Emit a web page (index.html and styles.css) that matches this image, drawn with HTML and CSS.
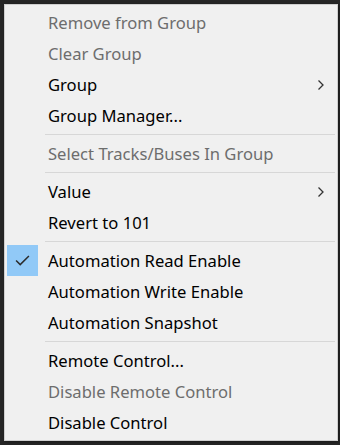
FILE: index.html
```html
<!DOCTYPE html>
<html lang="en">
<head>
    <meta charset="UTF-8">
    <title>Context Menu</title>
    <link rel="stylesheet" href="styles.css">
</head>
<body>
    <div class="menu">
        <div class="item disabled"><span class="check"></span><span class="label">Remove from Group</span></div>
        <div class="item disabled"><span class="check"></span><span class="label">Clear Group</span></div>
        <div class="item"><span class="check"></span><span class="label">Group</span>
            <svg class="arrow" viewBox="0 0 8 12"><path d="M1.5 1.5 L6 6 L1.5 10.5" /></svg>
        </div>
        <div class="item"><span class="check"></span><span class="label">Group Manager...</span></div>

        <div class="separator"></div>

        <div class="item disabled"><span class="check"></span><span class="label">Select Tracks/Buses In Group</span></div>

        <div class="separator"></div>

        <div class="item"><span class="check"></span><span class="label">Value</span>
            <svg class="arrow" viewBox="0 0 8 12"><path d="M1.5 1.5 L6 6 L1.5 10.5" /></svg>
        </div>
        <div class="item"><span class="check"></span><span class="label">Revert to 101</span></div>

        <div class="separator"></div>

        <div class="item"><span class="check checked">
            <svg viewBox="0 0 16 12"><path d="M1 6 L5.5 10.5 L15 1" /></svg>
        </span><span class="label">Automation Read Enable</span></div>
        <div class="item"><span class="check"></span><span class="label">Automation Write Enable</span></div>
        <div class="item"><span class="check"></span><span class="label">Automation Snapshot</span></div>

        <div class="separator"></div>

        <div class="item"><span class="check"></span><span class="label">Remote Control...</span></div>
        <div class="item disabled"><span class="check"></span><span class="label">Disable Remote Control</span></div>
        <div class="item"><span class="check"></span><span class="label">Disable Control</span></div>
    </div>
</body>
</html>
```

FILE: styles.css
```css
* {
    margin: 0;
    padding: 0;
    box-sizing: border-box;
}

body {
    font-family: 'Noto Sans', 'Open Sans', sans-serif;
    width: 340px;
    height: 445px;
    background: #262626;
    padding: 4px 2px 0 4px;
    overflow: hidden;
}

/* Menu box */
.menu {
    width: 334px;
    background: #f0f0f0;
    border: 1px solid #cfcfcf;
    padding: 2px 1px 2px 1px;
    display: flex;
    flex-direction: column;
    box-shadow: 1px 1px 3px rgba(0, 0, 0, 0.35);
}

.item {
    height: 31px;
    display: flex;
    align-items: center;
    font-size: 16.6px;
    color: #000;
    position: relative;
}

.item.disabled {
    color: #6d6d6d;
}

.check {
    width: 31px;
    height: 31px;
    margin-left: 1px;
    margin-right: 10px;
    display: flex;
    align-items: center;
    justify-content: center;
}

.check.checked {
    background: #91c9f7;
}

.check svg {
    width: 15px;
    height: 11px;
    fill: none;
    stroke: #2b2b2b;
    stroke-width: 1.6;
}

.label {
    flex: 1;
}

.arrow {
    width: 8px;
    height: 12px;
    margin-right: 11px;
    fill: none;
    stroke: #333;
    stroke-width: 1.3;
}

/* Separator */
.separator {
    height: 7px;
    margin-left: 39px;
    margin-right: 1px;
    display: flex;
    align-items: center;
}

.separator::after {
    content: "";
    flex: 1;
    height: 1px;
    background: #d7d7d7;
}
```
